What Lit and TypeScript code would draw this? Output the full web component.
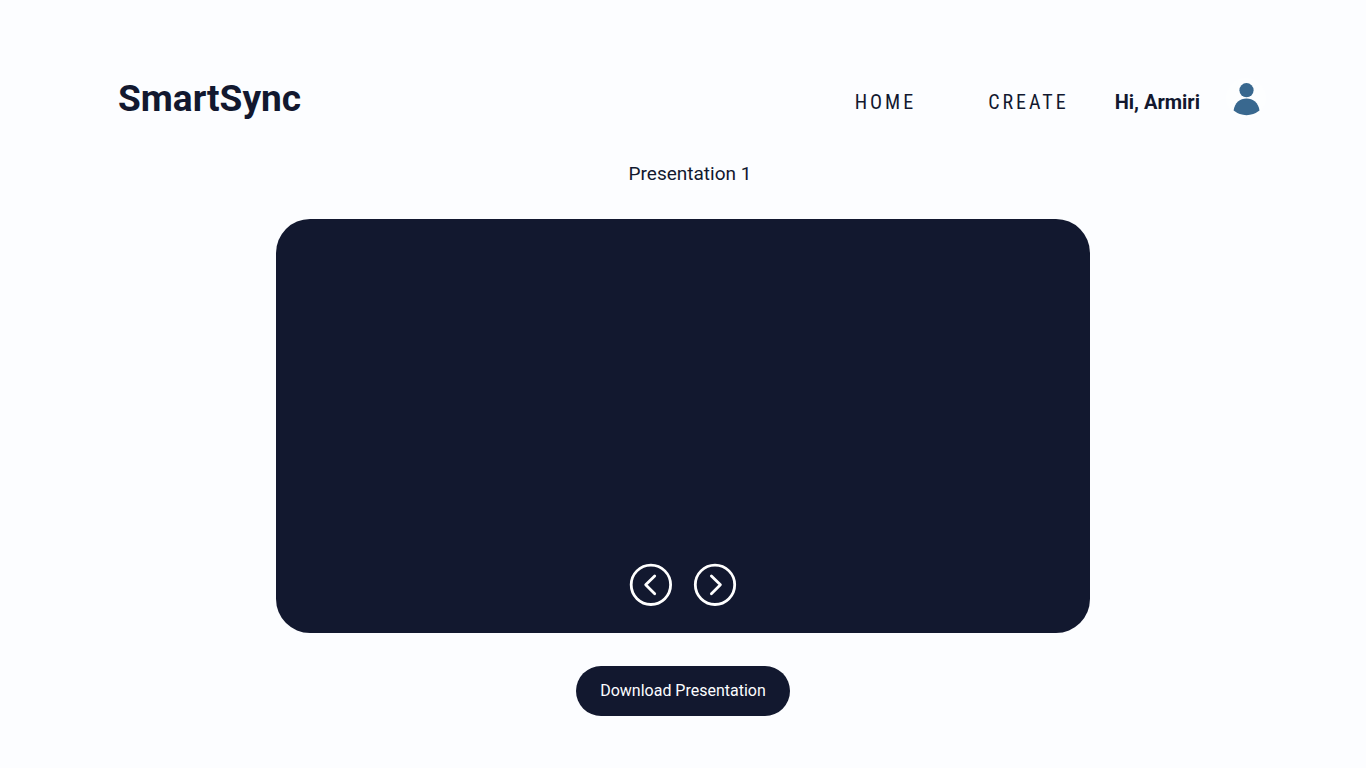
import { LitElement, html, css } from "lit";
import { customElement } from "lit/decorators.js";

@customElement("app-root")
export class AppRoot extends LitElement {
  static styles = css`
    :host {
      display: block;
      min-height: 100vh;
      box-sizing: border-box;
      padding: 74px 100px 52px;
      background: #fcfdff;
      color: #12182f;
      font-family: Roboto, sans-serif;
    }
    header { display: flex; align-items: center; height: 48px; padding-left: 18px; }
    .brand { margin: 0; padding-top: 2px; font-size: 37px; line-height: 48px; font-weight: 700; flex: 1; }
    nav { display: flex; align-items: center; }
    .link {
      color: inherit; text-decoration: none; font-size: 20px; line-height: 24px;
      letter-spacing: 3px; margin: 8px 72px 0 0; font-family: "Roboto Condensed", Roboto, sans-serif;
    }
    .link.last { margin-right: 46px; }
    .hello { font-size: 20px; line-height: 24px; font-weight: 700; margin: 8px 26px 0 0; }
    .avatar { border: 0; padding: 0; border-radius: 50%; background: #fdfeff; display: block; width: 40px; height: 40px; }
    main { display: flex; flex-direction: column; align-items: center; }
    .title { margin: 40px 0 33px 14px; font-size: 19px; line-height: 24px; font-weight: 400; }
    .slide {
      box-sizing: border-box; width: 100%; max-width: 814px; aspect-ratio: 814 / 414;
      background: #12182f; border-radius: 34px; display: flex; justify-content: center;
      align-items: flex-end; gap: 20px; padding-bottom: 26px;
    }
    .arrow { border: 0; padding: 0; background: none; width: 44px; height: 44px; }
    svg { display: block; }
    .download {
      margin-top: 33px; border: 0; border-radius: 25px; background: #12182f; color: #fcfdff;
      font: 400 16px/20px Roboto, sans-serif; padding: 15px 24px;
    }
  `;

  render() {
    return html`
      <header>
        <h1 class="brand">SmartSync</h1>
        <nav>
          <a class="link" href="#home">HOME</a>
          <a class="link last" href="#create">CREATE</a>
          <span class="hello">Hi, Armiri</span>
          <button class="avatar" aria-label="Account">
            <svg width="40" height="40" viewBox="0 0 40 40" fill="#39688f">
              <circle cx="20.5" cy="12.2" r="7.1" />
              <path d="M7.6 32.6C8.6 24.5 14 20.4 20.5 20.4S32.5 24.5 33.5 32.6Q27.5 37.2 20.5 37.2T7.6 32.6Z" />
            </svg>
          </button>
        </nav>
      </header>
      <main>
        <h2 class="title">Presentation 1</h2>
        <section class="slide" aria-label="Slide">
          <button class="arrow" aria-label="Previous slide">
            <svg width="44" height="44" viewBox="0 0 44 44" fill="none" stroke="#fff" stroke-width="2.8">
              <circle cx="21.9" cy="21.8" r="19.7" />
              <path d="M25.7 12.9L16.7 21.8L25.7 30.7" stroke-linecap="round" stroke-linejoin="round" />
            </svg>
          </button>
          <button class="arrow" aria-label="Next slide">
            <svg width="44" height="44" viewBox="0 0 44 44" fill="none" stroke="#fff" stroke-width="2.8">
              <circle cx="22" cy="21.8" r="19.7" />
              <path d="M18.4 12.9L27.4 21.8L18.4 30.7" stroke-linecap="round" stroke-linejoin="round" />
            </svg>
          </button>
        </section>
        <button class="download">Download Presentation</button>
      </main>
    `;
  }
}
